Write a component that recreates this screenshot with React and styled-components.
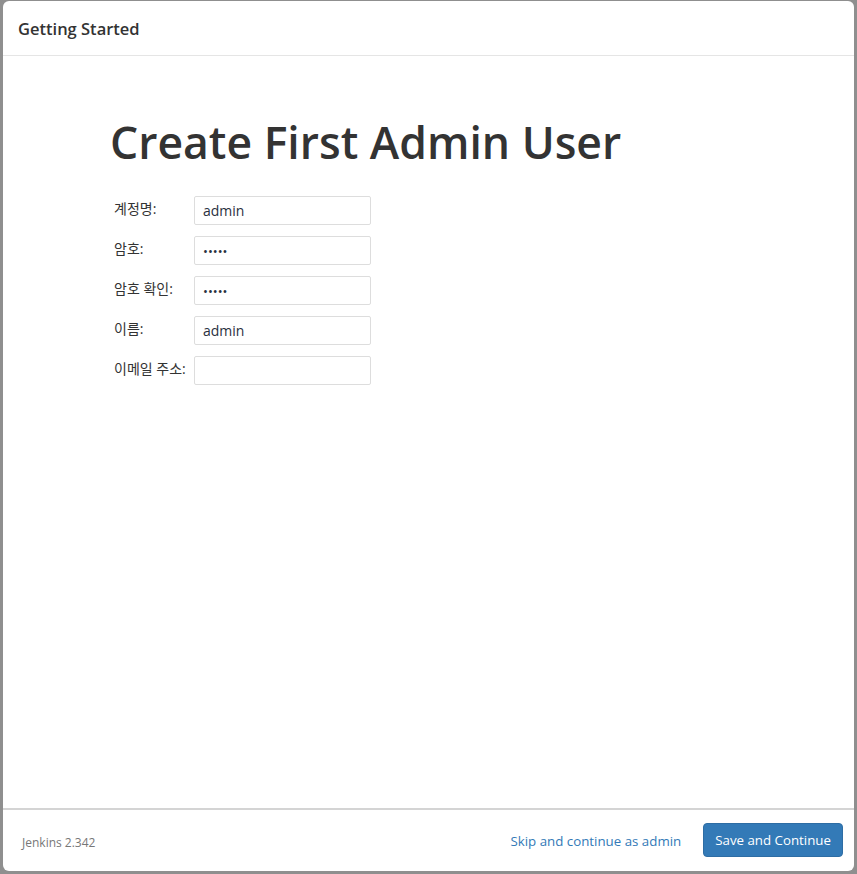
import React from "react";
import styled, { createGlobalStyle } from "styled-components";

const Global = createGlobalStyle`
  html, body { margin: 0; padding: 0; }
  body {
    background: #8f8f8f;
    font-family: "Open Sans", "Noto Sans CJK KR", sans-serif;
    color: #333;
  }
`;

const Panel = styled.div`
  margin: 1px 3px 3px 3px;
  height: 870px;
  box-sizing: border-box;
  background: #fff;
  border-radius: 6px;
  display: flex;
  flex-direction: column;
  overflow: hidden;
`;

const Header = styled.div`
  height: 55px;
  box-sizing: border-box;
  border-bottom: 1px solid #e5e5e5;
  display: flex;
  align-items: center;
  padding: 0 15px;
`;

const HeaderTitle = styled.h4`
  margin: 0;
  font-size: 16.5px;
  font-weight: 600;
  color: #333;
`;

const Body = styled.div`
  flex: 1;
  padding: 50px 0 0 107px;
`;

const Title = styled.h1`
  margin: 0 0 18px 0;
  font-size: 44.5px;
  font-weight: 600;
  line-height: 72px;
  color: #333;
`;

const Form = styled.div`
  display: grid;
  grid-template-columns: 80px 177px;
  row-gap: 11px;
  padding-left: 4px;
`;

const Label = styled.label`
  font-size: 14px;
  line-height: 20px;
  padding-top: 3px;
  color: #333;
  white-space: nowrap;
`;

const Input = styled.input`
  box-sizing: border-box;
  width: 177px;
  height: 29px;
  border: 1px solid #ddd;
  border-radius: 2px;
  padding: 0 8px;
  font-family: "Open Sans", "Noto Sans CJK KR", sans-serif;
  font-size: 14px;
  color: #2a3140;
  outline: none;
  &[type="password"] { font-size: 13px; }
`;

const Footer = styled.div`
  height: 63px;
  box-sizing: border-box;
  border-top: 2px solid #d4d4d4;
  display: flex;
  align-items: center;
  padding: 0 11px 0 19px;
`;

const Version = styled.span`
  font-size: 12px;
  color: #777;
  flex: 1;
  padding-top: 4px;
`;

const Link = styled.a`
  font-size: 13.3px;
  color: #337ab7;
  text-decoration: none;
  margin-right: 22px;
`;

const Button = styled.button`
  background: #337ab7;
  color: #fff;
  border: 1px solid #2e6da4;
  border-radius: 4px;
  height: 34px;
  padding: 0 11px;
  margin-top: -1px;
  font-family: "Open Sans", sans-serif;
  font-size: 13.3px;
`;

const fields = [
  { label: "계정명:", type: "text", value: "admin" },
  { label: "암호:", type: "password", value: "admin" },
  { label: "암호 확인:", type: "password", value: "admin" },
  { label: "이름:", type: "text", value: "admin" },
  { label: "이메일 주소:", type: "text", value: "" },
];

export default function App() {
  return (
    <>
      <Global />
      <Panel>
        <Header>
          <HeaderTitle>Getting Started</HeaderTitle>
        </Header>
        <Body>
          <Title>Create First Admin User</Title>
          <Form>
            {fields.map((f) => (
              <React.Fragment key={f.label}>
                <Label>{f.label}</Label>
                <Input type={f.type} defaultValue={f.value} />
              </React.Fragment>
            ))}
          </Form>
        </Body>
        <Footer>
          <Version>Jenkins 2.342</Version>
          <Link href="#">Skip and continue as admin</Link>
          <Button>Save and Continue</Button>
        </Footer>
      </Panel>
    </>
  );
}
